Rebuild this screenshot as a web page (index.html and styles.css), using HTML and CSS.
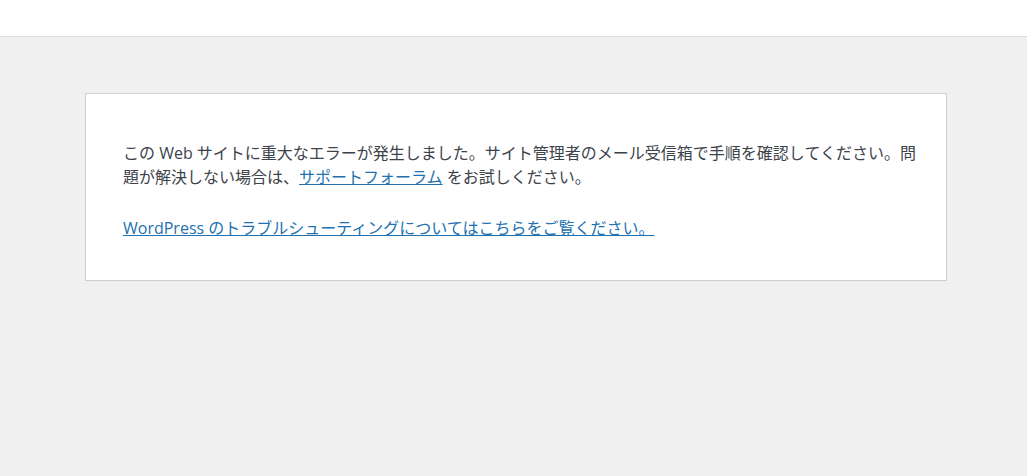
FILE: index.html
```html
<!DOCTYPE html>
<html lang="ja">
<head>
  <meta charset="UTF-8">
  <meta name="viewport" content="width=device-width, initial-scale=1.0">
  <title>WordPress &rsaquo; エラー</title>
  <link rel="stylesheet" href="styles.css">
</head>
<body>
  <div class="topbar"></div>

  <!-- Error message box -->
  <div class="error-page">
    <p class="message">この Web サイトに重大なエラーが発生しました。サイト管理者のメール受信箱で手順を確認してください。問題が解決しない場合は、<a href="#">サポートフォーラム</a> をお試しください。</p>
    <p class="help"><a href="#">WordPress のトラブルシューティングについてはこちらをご覧ください。</a></p>
  </div>
</body>
</html>
```

FILE: styles.css
```css
html {
  background: #f0f0f0;
}

body {
  margin: 0;
  font-family: "Open Sans", "Noto Sans CJK JP", sans-serif;
  color: #3c434a;
  overflow: hidden;
}

.topbar {
  height: 36px;
  background: #fff;
  border-bottom: 1px solid #dcdcdc;
}

.error-page {
  margin: 56px 80px 0 85px;
  padding: 47px 28px 40px 37px;
  background: #fff;
  border: 1px solid #ccd0d4;
}

.error-page p {
  font-size: 16px;
  line-height: 24px;
  margin: 0;
}

.error-page .help {
  margin-top: 27px;
}

.error-page a {
  color: #2271b1;
  text-decoration: underline;
}
```
